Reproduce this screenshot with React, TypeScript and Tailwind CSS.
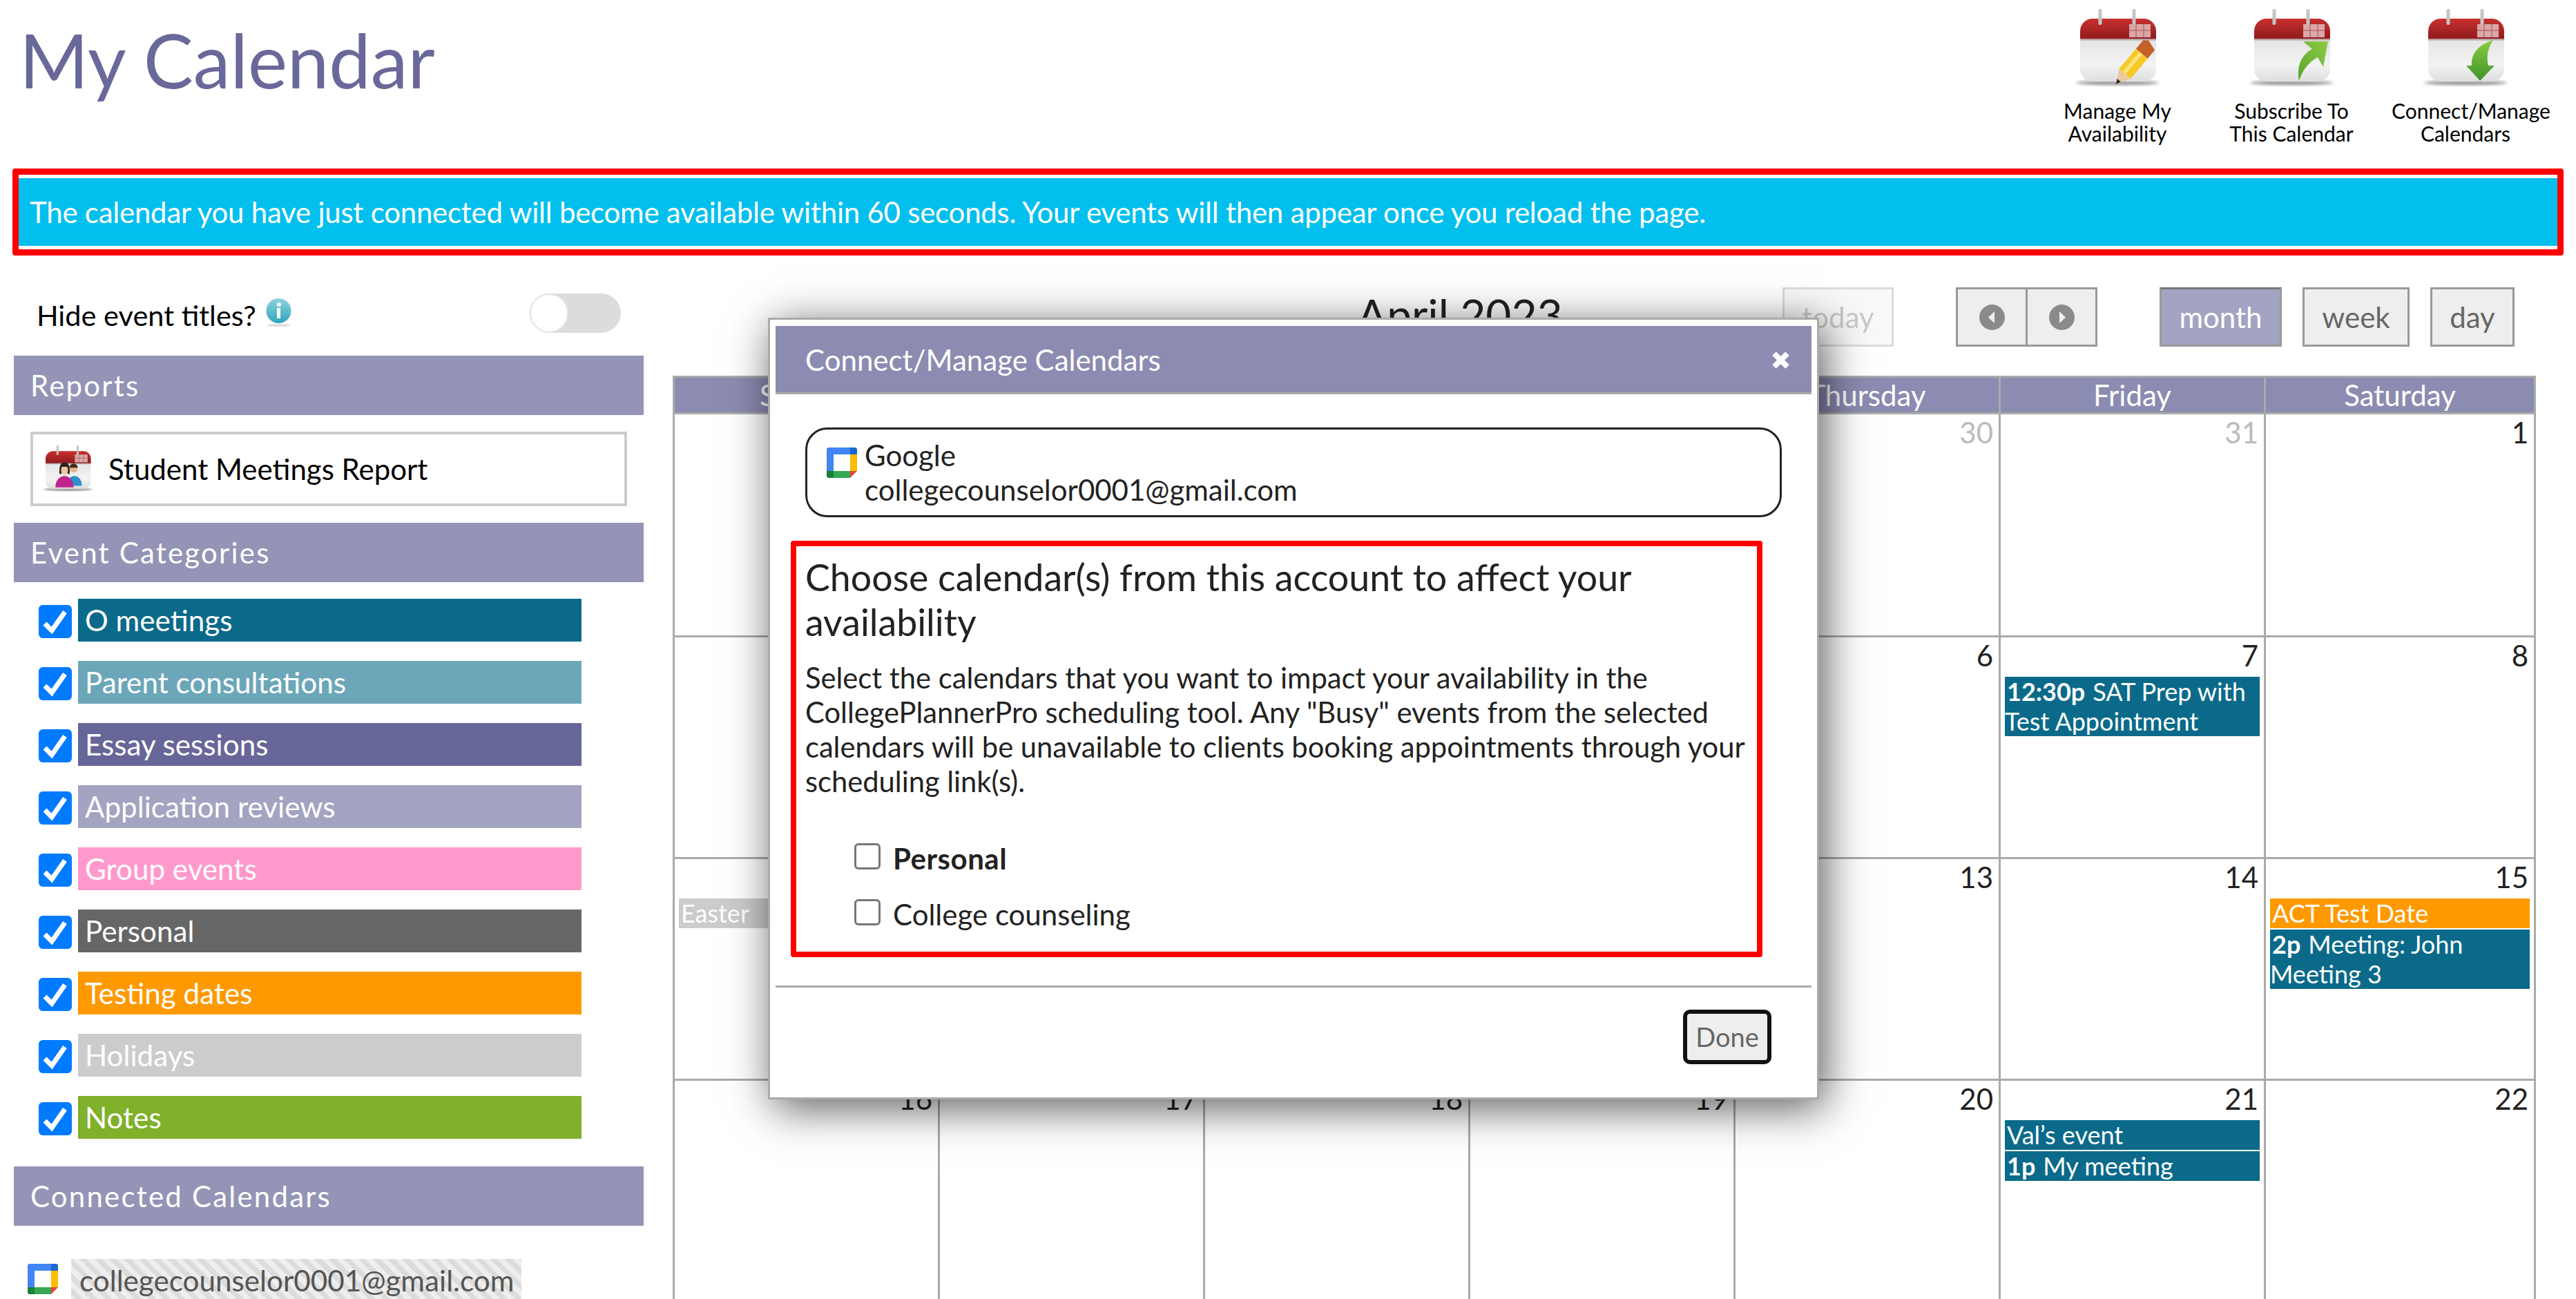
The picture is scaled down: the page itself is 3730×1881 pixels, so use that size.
import React from "react";

type EventItem = { time?: string; title: string; color: string };
type DayCell = { day: number; muted?: boolean; events?: EventItem[] };

const teal = "bg-[#0b6a8a]";

const categories = [
  { name: "O meetings", color: "bg-[#0b6a8a]" },
  { name: "Parent consultations", color: "bg-[#6ca7b9]" },
  { name: "Essay sessions", color: "bg-[#666699]" },
  { name: "Application reviews", color: "bg-[#a3a3c2]" },
  { name: "Group events", color: "bg-[#ff99cc]" },
  { name: "Personal", color: "bg-[#666666]" },
  { name: "Testing dates", color: "bg-[#ff9900]" },
  { name: "Holidays", color: "bg-[#cccccc]" },
  { name: "Notes", color: "bg-[#7fb12b]" },
];

const weekdays = ["Sunday", "Monday", "Tuesday", "Wednesday", "Thursday", "Friday", "Saturday"];

const days: DayCell[] = [
  { day: 26, muted: true },
  { day: 27, muted: true },
  { day: 28, muted: true },
  { day: 29, muted: true },
  { day: 30, muted: true },
  { day: 31, muted: true },
  { day: 1 },
  { day: 2 },
  { day: 3 },
  { day: 4 },
  { day: 5 },
  { day: 6 },
  { day: 7, events: [{ time: "12:30p", title: "SAT Prep with Test Appointment", color: teal }] },
  { day: 8 },
  { day: 9, events: [{ title: "Easter", color: "bg-[#cccccc]" }] },
  { day: 10 },
  { day: 11 },
  { day: 12 },
  { day: 13 },
  { day: 14 },
  {
    day: 15,
    events: [
      { title: "ACT Test Date", color: "bg-[#ff9900]" },
      { time: "2p", title: "Meeting: John Meeting 3", color: teal },
    ],
  },
  { day: 16 },
  { day: 17 },
  { day: 18 },
  { day: 19 },
  { day: 20 },
  {
    day: 21,
    events: [
      { title: "Val’s event", color: teal },
      { time: "1p", title: "My meeting", color: teal },
    ],
  },
  { day: 22 },
];

// calendar glyph used by the top-right links and the report button
function CalendarIcon({ id, className, children }: { id: string; className: string; children?: React.ReactNode }) {
  return (
    <svg viewBox="0 0 125 114" className={className}>
      <defs>
        <linearGradient id={`${id}-red`} x1="0" y1="0" x2="0" y2="1">
          <stop offset="0" stopColor="#c9302f" />
          <stop offset="1" stopColor="#8f1a1c" />
        </linearGradient>
        <linearGradient id={`${id}-body`} x1="0" y1="0" x2="0" y2="1">
          <stop offset="0" stopColor="#e4e4e4" />
          <stop offset="0.6" stopColor="#f3f3f3" />
          <stop offset="1" stopColor="#dedede" />
        </linearGradient>
        <filter id={`${id}-blur`}>
          <feGaussianBlur stdDeviation="2" />
        </filter>
      </defs>
      <ellipse cx="62" cy="107" rx="60" ry="3.5" fill="#9a9a9a" filter={`url(#${id}-blur)`} />
      <path d="M8 44h110v43a18 18 0 0 1-18 18H26A18 18 0 0 1 8 87z" fill={`url(#${id}-body)`} />
      <path d="M8 44V32a18 18 0 0 1 18-18h74a18 18 0 0 1 18 18v12z" fill={`url(#${id}-red)`} />
      <rect x="8" y="43" width="110" height="2.5" fill="#b9a3a3" />
      <rect x="79" y="22" width="31" height="19" fill="#d9a7a7" />
      <path d="M89 22v19M100 22v19M79 31h31" stroke="#b96d6d" strokeWidth="1.5" />
      <rect x="34.5" y="0" width="5" height="23" rx="2" fill="#c4c4c4" />
      <rect x="83.5" y="0" width="5" height="23" rx="2" fill="#c4c4c4" />
      {children}
    </svg>
  );
}

function Pencil() {
  return (
    <g>
      <polygon points="60,109 64.5,86.6 81.3,100.8" fill="#e8c9a0" />
      <polygon points="60,109 61.5,101 67,105.5" fill="#2b2b2b" />
      <polygon points="64.5,86.6 89,57.5 105.8,71.7 81.3,100.8" fill="#f6c924" />
      <polygon points="70,90 94,62 98,66 74,94" fill="#fbe27a" />
      <polygon points="89,57.5 99.3,45.3 107,45.5 116.1,59.5 105.8,71.7" fill="#c4602a" />
    </g>
  );
}

function UpArrow({ id }: { id: string }) {
  return (
    <g>
      <linearGradient id={id} x1="1" y1="0" x2="0" y2="1">
        <stop offset="0" stopColor="#8ccb45" />
        <stop offset="1" stopColor="#5da52f" />
      </linearGradient>
      <path d="M73 104C69 82 77 66 92 58L79 47h36l-7 37-8-14C88 76 78 88 73 104z" fill={`url(#${id})`} />
    </g>
  );
}

function DownArrow({ id }: { id: string }) {
  return (
    <g>
      <linearGradient id={id} x1="0" y1="0" x2="0" y2="1">
        <stop offset="0" stopColor="#8ccb45" />
        <stop offset="1" stopColor="#3e9428" />
      </linearGradient>
      <path d="M102 45C80 52 70 65 71 82h-8l20 22 21-22h-9c-3-14-1-24 7-37z" fill={`url(#${id})`} />
    </g>
  );
}

function People() {
  return (
    <g>
      <circle cx="76" cy="56" r="10" fill="#e5b48e" />
      <path d="M66 54a10 10 0 0 1 20 0z" fill="#3a2a20" />
      <path d="M60 98c0-18 10-24 18-24s18 6 18 24z" fill="#2f8fd0" />
      <circle cx="54" cy="60" r="11" fill="#f0c7a4" />
      <path d="M42 70c-2-22 4-29 12-29s15 7 12 29l-5-2c2-6 2-12-1-16H48c-3 4-3 10-1 16z" fill="#2a211c" />
      <path d="M32 102c0-20 12-28 22-28s22 8 22 28z" fill="#c1248e" />
    </g>
  );
}

function GoogleCalendarIcon({ className }: { className: string }) {
  return (
    <svg viewBox="0 0 44 44" className={className}>
      <path d="M3 0h31v10H10v24H0V3a3 3 0 0 1 3-3z" fill="#4285f4" />
      <path d="M34 0h7a3 3 0 0 1 3 3v7H34z" fill="#1967d2" />
      <rect x="34" y="10" width="10" height="24" fill="#fbbc04" />
      <rect x="10" y="34" width="24" height="10" fill="#34a853" />
      <path d="M0 34h10v10H3a3 3 0 0 1-3-3z" fill="#188038" />
      <path d="M34 34h10L34 44z" fill="#ea4335" />
    </svg>
  );
}

function TopLink({ lines, children }: { lines: React.ReactNode[]; children: React.ReactNode }) {
  return (
    <div className="flex w-[252px] flex-col items-center">
      {children}
      <div className="mt-[17px] text-center text-[30px] leading-[33px] text-black">
        {lines.map((line, i) => (
          <div key={i}>{line}</div>
        ))}
      </div>
    </div>
  );
}

function SideHeader({ children }: { children: React.ReactNode }) {
  return (
    <div className="flex h-[86px] items-center bg-[#9494b6] pl-[24px] text-[42px] tracking-[2.2px] text-white">
      {children}
    </div>
  );
}

function CheckedBox() {
  return (
    <div className="mt-[9px] flex h-[48px] w-[48px] items-center justify-center rounded-[6px] bg-[#007bff]">
      <svg viewBox="0 0 48 48" className="h-[48px] w-[48px]">
        <path d="M9 27l10 10L38 10" fill="none" stroke="#fff" strokeWidth="7" />
      </svg>
    </div>
  );
}

function NavCircle({ dir }: { dir: "left" | "right" }) {
  return (
    <svg viewBox="0 0 37 37" className="h-[37px] w-[37px]">
      <circle cx="18.5" cy="18.5" r="18.5" fill="#8a8a8a" />
      <path d={dir === "left" ? "M22 10v17l-9-8.5z" : "M15 10v17l9-8.5z"} fill="#efefef" />
    </svg>
  );
}

function CalendarGrid() {
  return (
    <div className="w-[2698px] border-l-[3px] border-[#aaaaaa]">
      <div className="grid grid-cols-[repeat(6,384px)_391px] border-y-[3px] border-[#aaaaaa] bg-[#8c8bb1]">
        {weekdays.map((d) => (
          <div
            key={d}
            className="flex h-[50px] items-center justify-center border-r-[3px] border-[#aaaaaa] text-[42px] text-white"
          >
            {d}
          </div>
        ))}
      </div>
      <div className="grid grid-cols-[repeat(6,384px)_391px] grid-rows-[323px_321px_321px_321px]">
        {days.map((cell) => (
          <div key={cell.day} className="border-r-[3px] border-b-[3px] border-[#aaaaaa]">
            <div
              className={`h-[57px] pr-[8px] text-right text-[42px] leading-[53px] ${
                cell.muted ? "text-[#bbbbbb]" : "text-[#222222]"
              }`}
            >
              {cell.day}
            </div>
            {cell.events?.map((ev) => (
              <div
                key={ev.title}
                className={`mx-[6px] mb-[2px] text-[36px] leading-[43px] text-white ${ev.color}`}
              >
                {ev.time ? (
                  <>
                    <b className="mr-[11px] ml-[3px] font-bold">{ev.time}</b>
                    {ev.title}
                  </>
                ) : (
                  <span className="ml-[3px]">{ev.title}</span>
                )}
              </div>
            ))}
          </div>
        ))}
      </div>
    </div>
  );
}

function ConnectModal() {
  return (
    <div className="absolute top-[460px] left-[1112px] h-[1132px] w-[1522px] border-[3px] border-[#aaaaaa] bg-white px-[8px] pt-[9px] text-[#222222] shadow-[8px_12px_60px_rgba(0,0,0,0.65)]">
      <div className="flex h-[99px] items-center justify-between border-b-[3px] border-[#aaaaaa] bg-[#8c8bb1] pt-[3px] pr-[30px] pl-[43px] text-[42px] text-white">
        <span>Connect/Manage Calendars</span>
        <svg viewBox="0 0 29 27" className="h-[27px] w-[29px]">
          <path d="M5 4l19 19M24 4L5 23" stroke="#fff" strokeWidth="8" />
        </svg>
      </div>

      <div className="mx-[43px] mt-[48px] flex h-[130px] rounded-[32px] border-[3px] border-[#222222] pt-[12px] pl-[28px] text-[42px] leading-[50px]">
        <GoogleCalendarIcon className="mt-[14px] mr-[11px] h-[44px] w-[44px]" />
        <div>
          <div>Google</div>
          <div>collegecounselor0001@gmail.com</div>
        </div>
      </div>

      <div className="mt-[34px] ml-[22px] h-[603px] w-[1407px] rounded-[4px] border-[8px] border-[#ff0000] pt-[12px] pl-[13px]">
        <h2 className="text-[53.7px] leading-[65px]">Choose calendar(s) from this account to affect your availability</h2>
        <p className="mt-[23px] w-[1370px] text-[41.7px] leading-[50px]">
          Select the calendars that you want to impact your availability in the CollegePlannerPro scheduling tool. Any
          "Busy" events from the selected calendars will be unavailable to clients booking appointments through your
          scheduling link(s).
        </p>
        <label className="mt-[62px] ml-[71px] flex items-center gap-[18px] text-[42px] leading-[50px] font-bold tracking-[0.5px]">
          <input
            type="checkbox"
            className="mb-[6px] h-[38px] w-[38px] appearance-none rounded-[6px] border-[3px] border-[#767676]"
          />
          Personal
        </label>
        <label className="mt-[31px] ml-[71px] flex items-center gap-[18px] text-[42px] leading-[50px]">
          <input
            type="checkbox"
            className="mb-[6px] h-[38px] w-[38px] appearance-none rounded-[6px] border-[3px] border-[#767676]"
          />
          College counseling
        </label>
      </div>

      <div className="mt-[41px] border-t-[3px] border-[#aaaaaa]" />
      <div className="mt-[32px] flex justify-end pr-[58px]">
        <button className="h-[79px] w-[128px] rounded-[10px] border-[6px] border-[#111111] bg-[#eeeeee] text-[38px] text-[#666666]">
          Done
        </button>
      </div>
    </div>
  );
}

export default function App() {
  return (
    <div className="relative h-[1881px] w-[3730px] overflow-hidden bg-white font-['Lato',sans-serif]">
      <header className="flex h-[244px] items-start justify-between pr-[34px]">
        <h1 className="pt-[22px] pl-[28px] text-[108px] leading-[128px] text-[#68689a]">My Calendar</h1>
        <div className="flex pt-[13px]">
          <TopLink lines={["Manage My", "Availability"]}>
            <CalendarIcon id="ic1" className="h-[114px] w-[125px]">
              <Pencil />
            </CalendarIcon>
          </TopLink>
          <TopLink lines={["Subscribe To", "This Calendar"]}>
            <CalendarIcon id="ic2" className="h-[114px] w-[125px]">
              <UpArrow id="ic2-arrow" />
            </CalendarIcon>
          </TopLink>
          <TopLink lines={[<span className="pl-[16px]">Connect/Manage</span>, "Calendars"]}>
            <CalendarIcon id="ic3" className="h-[114px] w-[125px]">
              <DownArrow id="ic3-arrow" />
            </CalendarIcon>
          </TopLink>
        </div>
      </header>

      <div className="mx-[18px] h-[126px] rounded-[4px] border-[9px] border-[#ff0000] py-[5px]">
        <div className="flex h-[98px] items-center bg-[#03bfee] pl-[16px] text-[42px] tracking-[-0.24px] text-white">
          The calendar you have just connected will become available within 60 seconds. Your events will then appear once
          you reload the page.
        </div>
      </div>

      <main className="flex pl-[20px]">
        <aside className="w-[912px]">
          <div className="mt-[55px] flex h-[57px] items-center justify-between pr-[33px] pl-[33px]">
            <div className="flex items-center pt-[5px] text-[41.5px] text-black">
              Hide event titles?
              <svg viewBox="0 0 39 42" className="mb-[8px] ml-[13px] h-[42px] w-[39px]">
                <defs>
                  <linearGradient id="info" x1="0" y1="0" x2="0" y2="1">
                    <stop offset="0" stopColor="#8fd3df" />
                    <stop offset="1" stopColor="#2fa6bd" />
                  </linearGradient>
                </defs>
                <ellipse cx="19.5" cy="40" rx="17" ry="2" fill="#dddddd" />
                <circle cx="19.5" cy="19" r="18" fill="url(#info)" />
                <rect x="17" y="15" width="5" height="15" fill="#fff" />
                <circle cx="20" cy="10" r="3" fill="#fff" />
              </svg>
            </div>
            <div className="flex h-[57px] w-[132px] rounded-full bg-[#dcdcdc]">
              <div className="h-[57px] w-[56px] rounded-full border-[2px] border-[#e4e4e4] bg-white" />
            </div>
          </div>

          <div className="mt-[33px]">
            <SideHeader>Reports</SideHeader>
          </div>
          <div className="mt-[24px] ml-[24px] flex h-[108px] w-[864px] items-center border-[4px] border-[#cccccc] pl-[13px] text-[42px] text-black">
            <CalendarIcon id="ic4" className="h-[68px] w-[75px]">
              <People />
            </CalendarIcon>
            <span className="ml-[21px]">Student Meetings Report</span>
          </div>

          <div className="mt-[24px]">
            <SideHeader>Event Categories</SideHeader>
          </div>
          <div className="mt-[24px] flex flex-col gap-[28px] pl-[36px]">
            {categories.map((c) => (
              <div key={c.name} className="flex gap-[9px]">
                <CheckedBox />
                <div className={`flex h-[62px] w-[729px] items-center pl-[10px] text-[42.2px] text-white ${c.color}`}>
                  {c.name}
                </div>
              </div>
            ))}
          </div>

          <div className="mt-[40px]">
            <SideHeader>Connected Calendars</SideHeader>
          </div>
          <div className="mt-[48px] flex pl-[20px]">
            <GoogleCalendarIcon className="mt-[7px] mr-[19px] h-[44px] w-[44px]" />
            <div className="h-[62px] w-[652px] bg-[repeating-linear-gradient(45deg,#eeeeee_0,#eeeeee_7.5px,#dcdcdc_7.5px,#dcdcdc_15px)] pl-[12px] text-[42.2px] leading-[62px] text-[#555555]">
              collegecounselor0001@gmail.com
            </div>
          </div>
        </aside>

        <section className="ml-[42px]">
          <div className="mt-[46px] flex h-[128px] items-start">
            <h2 className="ml-[991px] w-[616px] text-[64px] leading-[80px] text-[#222222]">April 2023</h2>
            <div className="flex h-[86px] w-[161px] items-center justify-center border-[3px] border-[#999999] bg-[#eeeeee] text-[42px] text-[#666666] opacity-35">
              today
            </div>
            <div className="ml-[90px] flex h-[86px] w-[205px] border-[3px] border-[#999999] bg-[#eeeeee]">
              <div className="flex w-[101px] items-center justify-center border-r-[3px] border-[#999999]">
                <NavCircle dir="left" />
              </div>
              <div className="flex w-[98px] items-center justify-center">
                <NavCircle dir="right" />
              </div>
            </div>
            <div className="ml-[90px] flex gap-[30px] text-[42px]">
              <div className="flex h-[86px] w-[177px] items-center justify-center border-[3px] border-[#999999] border-t-[#777777] bg-[#a3a3c2] text-white">
                month
              </div>
              <div className="flex h-[86px] w-[155px] items-center justify-center border-[3px] border-[#999999] bg-[#eeeeee] text-[#666666]">
                week
              </div>
              <div className="flex h-[86px] w-[122px] items-center justify-center border-[3px] border-[#999999] bg-[#eeeeee] text-[#666666]">
                day
              </div>
            </div>
          </div>
          <CalendarGrid />
        </section>
      </main>

      <ConnectModal />
    </div>
  );
}
